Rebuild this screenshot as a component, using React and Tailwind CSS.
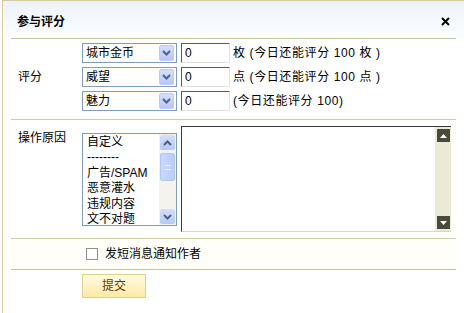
import React from 'react';

const font = 'font-["Liberation_Sans","Noto_Sans_CJK_SC",sans-serif]';

const Chevron = ({ up }) => (
  <svg width="9" height="6" viewBox="0 0 9 6" className={up ? 'rotate-180' : ''}>
    <path d="M1 1 L4.5 4.5 L8 1" stroke="#4d6185" strokeWidth="2" fill="none" />
  </svg>
);

const Select = ({ label }) => (
  <div className="w-[95px] h-[20px] border border-[#7f9db9] bg-white flex items-center justify-between">
    <span className="pl-[3px] leading-none">{label}</span>
    <div className="w-[15px] h-[16px] mr-[2px] rounded-[2px] bg-gradient-to-b from-[#d3e0fb] to-[#b5c9f5] border border-[#b9cdf7] flex items-center justify-center">
      <Chevron />
    </div>
  </div>
);

const NumInput = () => (
  <div className="ml-[4px] w-[49px] h-[20px] bg-white border border-t-[#5a5a5a] border-l-[#5a5a5a] border-b-[#e6e3da] border-r-[#e6e3da] flex items-center pl-[3px] leading-none">
    0
  </div>
);

const scoreRows = [
  { label: '城市金币', note: '枚 (今日还能评分 100 枚 )' },
  { label: '威望', note: '点 (今日还能评分 100 点 )' },
  { label: '魅力', note: '(今日还能评分 100)' },
];

const reasons = ['自定义', '--------', '广告/SPAM', '恶意灌水', '违规内容', '文不对题'];

const App = () => {
  return (
    <div className={`w-[468px] h-[313px] bg-white overflow-hidden text-[12px] text-black ${font}`}>
      <div className="ml-[2px] mr-[4px] h-full border-l border-t border-[#d6c99e] bg-white">
        {/* Header */}
        <div className="h-[37px] bg-gradient-to-b from-[#eef3fa] to-[#fbfdff] flex items-center justify-between pl-[14px] pr-[14px] pt-[4px]">
          <span className="font-bold text-[12px]">参与评分</span>
          <svg width="9" height="9" viewBox="0 0 9 9">
            <path d="M1 1 L8 8 M8 1 L1 8" stroke="#000" strokeWidth="2" />
          </svg>
        </div>

        <div className="px-[8px]">
          <div className="border-t border-[#c9c3a4]" />

          {/* Score rows */}
          <div className="flex border-b border-[#d3cba6] pt-[4px] pb-[8px]">
            <div className="w-[71px] flex items-center pl-[7px]">评分</div>
            <div className="flex flex-col gap-[4px]">
              {scoreRows.map(row => (
                <div key={row.label} className="flex items-center">
                  <Select label={row.label} />
                  <NumInput />
                  <span className="ml-[3px] whitespace-pre tracking-[0.6px]">{row.note}</span>
                </div>
              ))}
            </div>
          </div>

          {/* Reason */}
          <div className="flex border-b border-[#d3cba6] pt-[6px] pb-[6px]">
            <div className="w-[71px] pl-[7px] pt-[3px]">操作原因</div>
            <div className="flex gap-[4px]">
              <div className="mt-[7px] w-[95px] h-[93px] border border-[#7f9db9] bg-white flex">
                <div className="flex-1 pl-[4px] pt-[1px] leading-[15.4px]">
                  {reasons.map(r => (
                    <div key={r}>{r}</div>
                  ))}
                </div>
                <div className="w-[17px] bg-[#f4f3ee] flex flex-col items-center py-[1px]">
                  <div className="w-[15px] h-[15px] rounded-[2px] bg-gradient-to-b from-[#d3e0fb] to-[#b5c9f5] flex items-center justify-center">
                    <Chevron up />
                  </div>
                  <div className="mt-[3px] w-[15px] h-[28px] rounded-[2px] bg-gradient-to-r from-[#c9d8fb] to-[#b9cdf7] border border-[#b3c6f2] flex items-center justify-center">
                    <div className="w-[6px] h-[5px] border-t border-b border-[#eef3fd]" />
                  </div>
                  <div className="flex-1" />
                  <div className="w-[15px] h-[15px] rounded-[2px] bg-gradient-to-b from-[#d3e0fb] to-[#b5c9f5] flex items-center justify-center">
                    <Chevron />
                  </div>
                </div>
              </div>
              <div className="w-[270px] h-[106px] bg-white border-t border-l border-[#3a3a3a] border-b border-b-[#d8d6cc] flex">
                <div className="flex-1" />
                <div className="w-[16px] bg-[#ebead6] flex flex-col items-center justify-between pt-[2px] pb-[2px]">
                  <div className="w-[13px] h-[13px] bg-[#4a4a3a] flex items-center justify-center">
                    <svg width="7" height="4" viewBox="0 0 7 4"><path d="M0 4 L3.5 0 L7 4 Z" fill="#fff" /></svg>
                  </div>
                  <div className="w-[13px] h-[13px] bg-[#4a4a3a] flex items-center justify-center">
                    <svg width="7" height="4" viewBox="0 0 7 4"><path d="M0 0 L3.5 4 L7 0 Z" fill="#fff" /></svg>
                  </div>
                </div>
              </div>
            </div>
          </div>

          {/* Notify */}
          <div className="flex items-center border-b border-[#c9c0a0] h-[31px] bg-[#fffef8]">
            <div className="w-[71px]" />
            <div className="ml-[4px] w-[12px] h-[12px] border border-[#8e8f8f] bg-white" />
            <span className="ml-[7px]">发短消息通知作者</span>
          </div>

          {/* Submit */}
          <div className="flex pt-[4px]">
            <div className="w-[71px]" />
            <div className="w-[64px] h-[24px] border border-[#e2cf95] bg-gradient-to-b from-[#fffbe0] to-[#ffeaa6] flex items-center justify-center text-[#5a3d0a]">
              提交
            </div>
          </div>
        </div>
      </div>
    </div>
  );
};

export default App;
